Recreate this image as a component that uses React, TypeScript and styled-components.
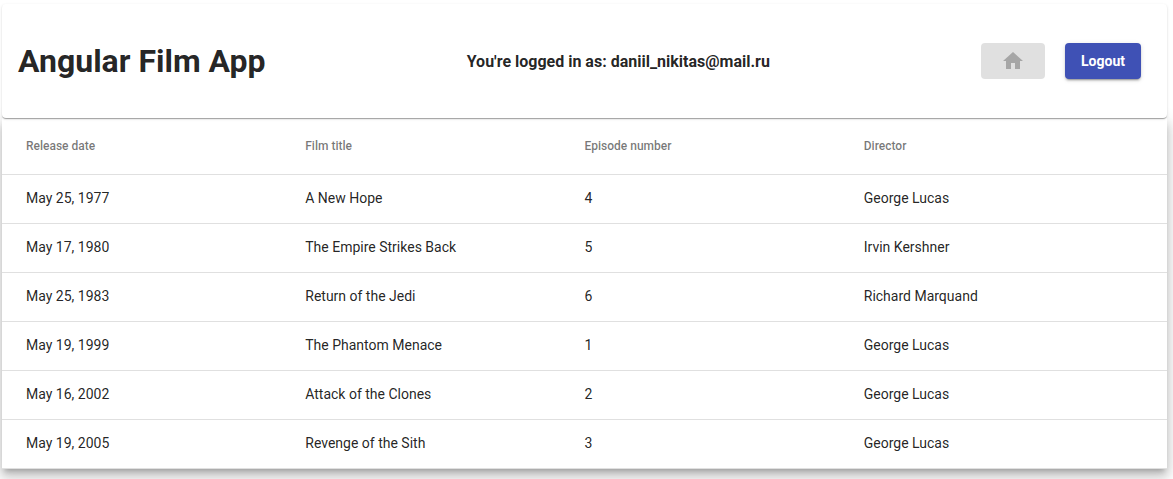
import React from 'react';
import styled, { createGlobalStyle } from 'styled-components';

const GlobalStyle = createGlobalStyle`
  * { box-sizing: border-box; }
  body {
    margin: 0;
    background: #fff;
    color: rgba(0, 0, 0, 0.87);
    font-family: Roboto, "Liberation Sans", sans-serif;
  }
`;

const Page = styled.div`
  padding: 4px 6px 10px 2px;
`;

const Header = styled.header`
  position: relative;
  display: flex;
  align-items: center;
  justify-content: space-between;
  padding: 16px;
  min-height: 114px;
  background: #fff;
  border-radius: 4px;
  box-shadow: 0 2px 1px -1px rgba(0, 0, 0, 0.2), 0 1px 1px 0 rgba(0, 0, 0, 0.14),
    0 1px 3px 0 rgba(0, 0, 0, 0.12);
`;

const Title = styled.h1`
  margin: 0;
  font-size: 32px;
  line-height: 38px;
  font-weight: 700;
`;

const UserInfo = styled.p`
  margin: 0;
  padding-top: 2px;
  font-size: 16px;
  line-height: 24px;
  font-weight: 700;
`;

const Actions = styled.nav`
  display: flex;
  gap: 20px;
  padding: 0 10px;
`;

const Button = styled.button<{ $primary?: boolean }>`
  display: inline-flex;
  align-items: center;
  justify-content: center;
  min-width: 64px;
  height: 36px;
  padding: 0 16px;
  border: 0;
  border-radius: 4px;
  font: 700 14px/36px Roboto, "Liberation Sans", sans-serif;
  color: ${(p) => (p.$primary ? '#fff' : 'rgba(0, 0, 0, 0.26)')};
  background: ${(p) => (p.$primary ? '#3f51b5' : 'rgba(0, 0, 0, 0.12)')};
  box-shadow: ${(p) =>
    p.$primary
      ? '0 3px 1px -2px rgba(0, 0, 0, 0.2), 0 2px 2px 0 rgba(0, 0, 0, 0.14), 0 1px 5px 0 rgba(0, 0, 0, 0.12)'
      : 'none'};
`;

const Table = styled.table`
  display: block;
  background: #fff;
  box-shadow: 0 5px 5px -3px rgba(0, 0, 0, 0.2), 0 8px 10px 1px rgba(0, 0, 0, 0.14),
    0 3px 14px 2px rgba(0, 0, 0, 0.12);
`;

const RowGroup = styled.tbody`
  display: block;
`;

const Row = styled.tr<{ $head?: boolean }>`
  display: flex;
  align-items: center;
  min-height: ${(p) => (p.$head ? 57 : 49)}px;
  padding: 0 24px;
  border-bottom: 1px solid rgba(0, 0, 0, 0.12);
`;

const HeadCell = styled.th`
  flex: 1;
  padding: 0;
  text-align: left;
  font-size: 12px;
  line-height: 16px;
  font-weight: 500;
  color: rgba(0, 0, 0, 0.54);
`;

const Cell = styled.td`
  flex: 1;
  padding: 0 0 2px;
  font-size: 14px;
  line-height: 18px;
`;

const columns = ['Release date', 'Film title', 'Episode number', 'Director'];

const films = [
  ['May 25, 1977', 'A New Hope', '4', 'George Lucas'],
  ['May 17, 1980', 'The Empire Strikes Back', '5', 'Irvin Kershner'],
  ['May 25, 1983', 'Return of the Jedi', '6', 'Richard Marquand'],
  ['May 19, 1999', 'The Phantom Menace', '1', 'George Lucas'],
  ['May 16, 2002', 'Attack of the Clones', '2', 'George Lucas'],
  ['May 19, 2005', 'Revenge of the Sith', '3', 'George Lucas'],
];

export default function App() {
  return (
    <>
      <GlobalStyle />
      <Page>
        <Header>
          <Title>Angular Film App</Title>
          <UserInfo>You're logged in as: daniil_nikitas@mail.ru</UserInfo>
          <Actions>
            <Button type="button" disabled aria-label="Home">
              <svg width="24" height="24" viewBox="0 0 24 24" fill="currentColor" aria-hidden="true">
                <path d="M10 20v-6h4v6h5v-8h3L12 3 2 12h3v8z" />
              </svg>
            </Button>
            <Button type="button" $primary>Logout</Button>
          </Actions>
        </Header>
        <Table>
          <RowGroup as="thead">
            <Row $head>
              {columns.map((c) => (
                <HeadCell key={c} scope="col">{c}</HeadCell>
              ))}
            </Row>
          </RowGroup>
          <RowGroup>
            {films.map((film) => (
              <Row key={film[1]}>
                {film.map((value, i) => (
                  <Cell key={columns[i]}>{value}</Cell>
                ))}
              </Row>
            ))}
          </RowGroup>
        </Table>
      </Page>
    </>
  );
}
